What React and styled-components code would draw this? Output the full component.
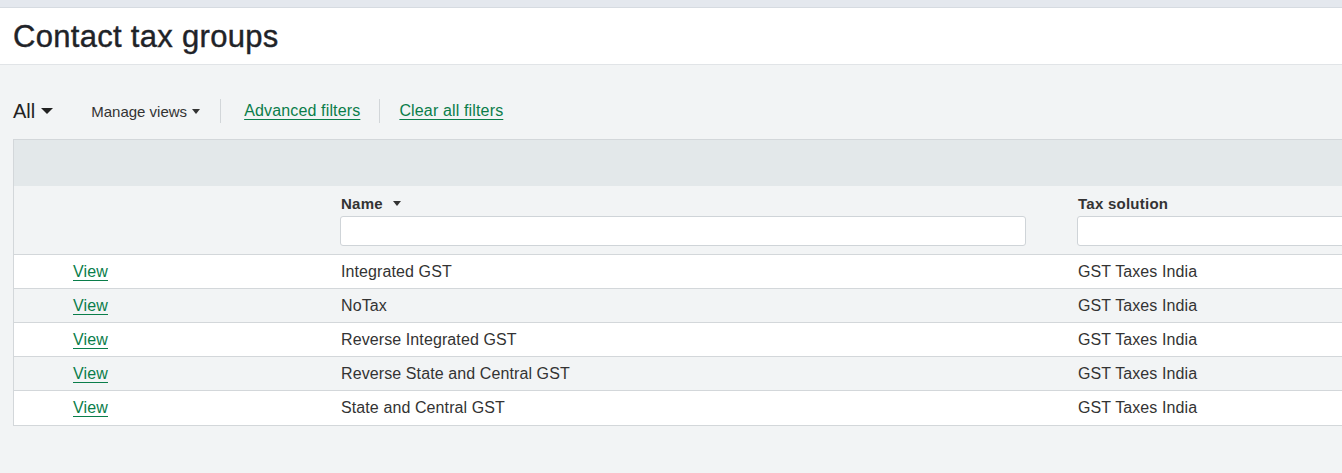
import React from "react";
import styled, { createGlobalStyle } from "styled-components";

// style
const Global = createGlobalStyle`
  html, body {
    margin: 0;
    padding: 0;
    background-color: #f2f4f5;
    overflow: hidden;
  }
  body {
    font-family: "Liberation Sans", Arial, sans-serif;
    color: #333333;
  }
`;
const Strip = styled.div`
  height: 7px;
  background-color: #e4e8ee;
  border-bottom: 1px solid #d6dbe1;
`;
const Header = styled.header`
  height: 57px;
  background-color: #ffffff;
  border-bottom: 1px solid #e1e4e7;
  display: flex;
  align-items: center;
  padding: 2px 0 0 13px;
  box-sizing: border-box;
`;
const Title = styled.h1`
  margin: 0;
  font-size: 31px;
  font-weight: 400;
  color: #1f2328;
  letter-spacing: 0.3px;
  -webkit-text-stroke: 0.4px #1f2328;
`;
const Toolbar = styled.div`
  display: flex;
  align-items: center;
  height: 26px;
  margin: 33px 0 15px 13px;
`;
const ViewPicker = styled.div`
  display: flex;
  align-items: center;
  gap: 6px;
  font-size: 20px;
  color: #222;
  margin-right: 38px;
`;
const Menu = styled.div`
  display: flex;
  align-items: center;
  gap: 5px;
  font-size: 15px;
  color: #333;
`;
const Sep = styled.span`
  width: 1px;
  height: 24px;
  background-color: #d2d6d9;
  margin: 0 ${(p) => p.$right || 23}px 0 ${(p) => p.$left || 20}px;
`;
const Link = styled.a`
  color: #0a7d4a;
  font-size: 16px;
  letter-spacing: 0.15px;
  text-decoration: underline;
  text-underline-offset: 3px;
  text-decoration-thickness: 1px;
  cursor: pointer;
`;
const Caret = styled.span`
  width: 0;
  height: 0;
  border-left: ${(p) => p.$w}px solid transparent;
  border-right: ${(p) => p.$w}px solid transparent;
  border-top: ${(p) => p.$h}px solid currentColor;
  display: inline-block;
`;
const Table = styled.div`
  margin-left: 13px;
  width: 1420px;
  border: 1px solid #d3d7da;
  background-color: #ffffff;
`;
const Band = styled.div`
  height: 46px;
  background-color: #e3e8ea;
`;
const Row = styled.div`
  display: grid;
  grid-template-columns: 326px 737px 1fr;
  align-items: center;
  height: ${(p) => (p.$last ? 35 : 34)}px;
  background-color: ${(p) => (p.$alt ? "#f2f4f5" : "#ffffff")};
  border-top: 1px solid #d3d7da;
  box-sizing: border-box;
  font-size: 16px;
  letter-spacing: 0.1px;
`;
const HeadRow = styled(Row)`
  height: 68px;
  background-color: #f2f4f5;
  border-top: none;
  align-items: start;
`;
const HeadCell = styled.div`
  padding-top: 9px;
  display: flex;
  flex-direction: column;
  gap: 4px;
`;
const Label = styled.div`
  display: flex;
  align-items: center;
  gap: 10px;
  font-weight: 700;
  font-size: 15px;
  letter-spacing: 0.25px;
  color: #333;
  padding-left: 1px;
`;
const Filter = styled.input`
  box-sizing: border-box;
  width: ${(p) => p.$w}px;
  height: 30px;
  border: 1px solid #cfd4d8;
  border-radius: 3px;
  background: #ffffff;
`;
const LinkCell = styled.div`
  padding-left: 59px;
`;
const Cell = styled.div`
  padding-left: 1px;
  color: #333;
`;

const rows = [
  "Integrated GST",
  "NoTax",
  "Reverse Integrated GST",
  "Reverse State and Central GST",
  "State and Central GST",
];

const App = () => (
  <>
    <Global />
    <Strip />
    <Header>
      <Title>Contact tax groups</Title>
    </Header>
    <Toolbar>
      <ViewPicker>
        All <Caret $w={6} $h={6} />
      </ViewPicker>
      <Menu>
        Manage views <Caret $w={4} $h={5} />
      </Menu>
      <Sep />
      <Link>Advanced filters</Link>
      <Sep $left={19} $right={19} />
      <Link>Clear all filters</Link>
    </Toolbar>
    <Table>
      <Band />
      <HeadRow>
        <div />
        <HeadCell>
          <Label>
            Name <Caret $w={4} $h={5} />
          </Label>
          <Filter $w={686} />
        </HeadCell>
        <HeadCell>
          <Label>Tax solution</Label>
          <Filter $w={400} />
        </HeadCell>
      </HeadRow>
      {rows.map((name, i) => (
        <Row key={name} $alt={i % 2 === 1} $last={i === rows.length - 1}>
          <LinkCell>
            <Link>View</Link>
          </LinkCell>
          <Cell>{name}</Cell>
          <Cell>GST Taxes India</Cell>
        </Row>
      ))}
    </Table>
  </>
);

export default App;
